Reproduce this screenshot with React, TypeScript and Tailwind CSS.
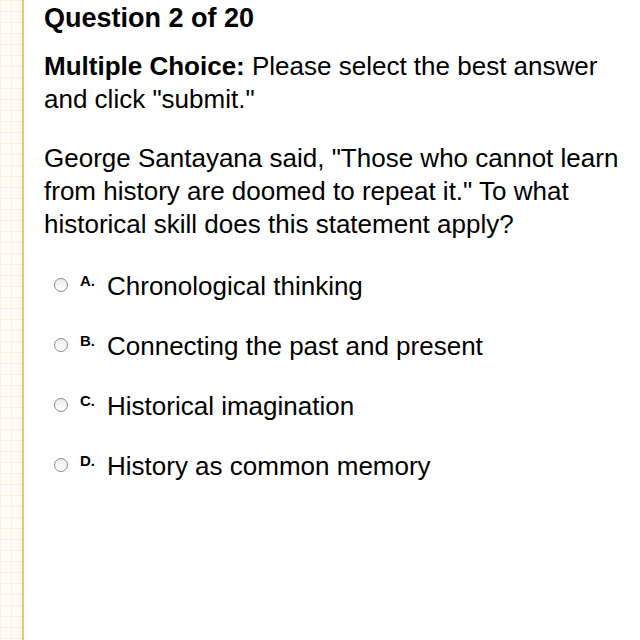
export default function App() {
    const options = [
        { letter: 'A.', text: 'Chronological thinking' },
        { letter: 'B.', text: 'Connecting the past and present' },
        { letter: 'C.', text: 'Historical imagination' },
        { letter: 'D.', text: 'History as common memory' },
    ];

    return (
        <div className="flex w-[640px] h-[640px] bg-white overflow-hidden" style={{ fontFamily: '"Liberation Sans", Arial, sans-serif' }}>
            {/* grid paper strip */}
            <div className="w-[22px] shrink-0 bg-[#fffdf6] bg-[linear-gradient(#f8f2de_1px,transparent_1px),linear-gradient(90deg,#f8f2de_1px,transparent_1px)] bg-[size:11px_11px]"></div>
            <div className="w-[2px] shrink-0 bg-[#f0c865]"></div>

            <div className="flex-1 pl-[20px] pr-[8px] text-black">
                <h1 className="text-[27px] font-bold leading-[30px] mt-[3px]">Question 2 of 20</h1>

                <p className="text-[26px] leading-[33px] mt-[17px]">
                    <span className="font-bold">Multiple Choice:</span> Please select the best answer and click "submit."
                </p>

                <p className="text-[26px] leading-[33px] mt-[26px]">
                    George Santayana said, "Those who cannot learn from history are doomed to repeat it." To what historical skill does this statement apply?
                </p>

                <div className="mt-[31px] flex flex-col gap-[31px]">
                    {options.map((o) => (
                        <div key={o.letter} className="flex items-start h-[29px]">
                            <span className="mt-[6px] ml-[10px] w-[14px] h-[14px] rounded-full border border-[#8a8a8a] bg-[linear-gradient(#ececec,#ffffff)] shrink-0"></span>
                            <span className="ml-[12px] w-[27px] text-[15px] font-bold leading-[15px] mt-[1px]">{o.letter}</span>
                            <span className="text-[26px] leading-[29px]">{o.text}</span>
                        </div>
                    ))}
                </div>
            </div>
        </div>
    );
}
